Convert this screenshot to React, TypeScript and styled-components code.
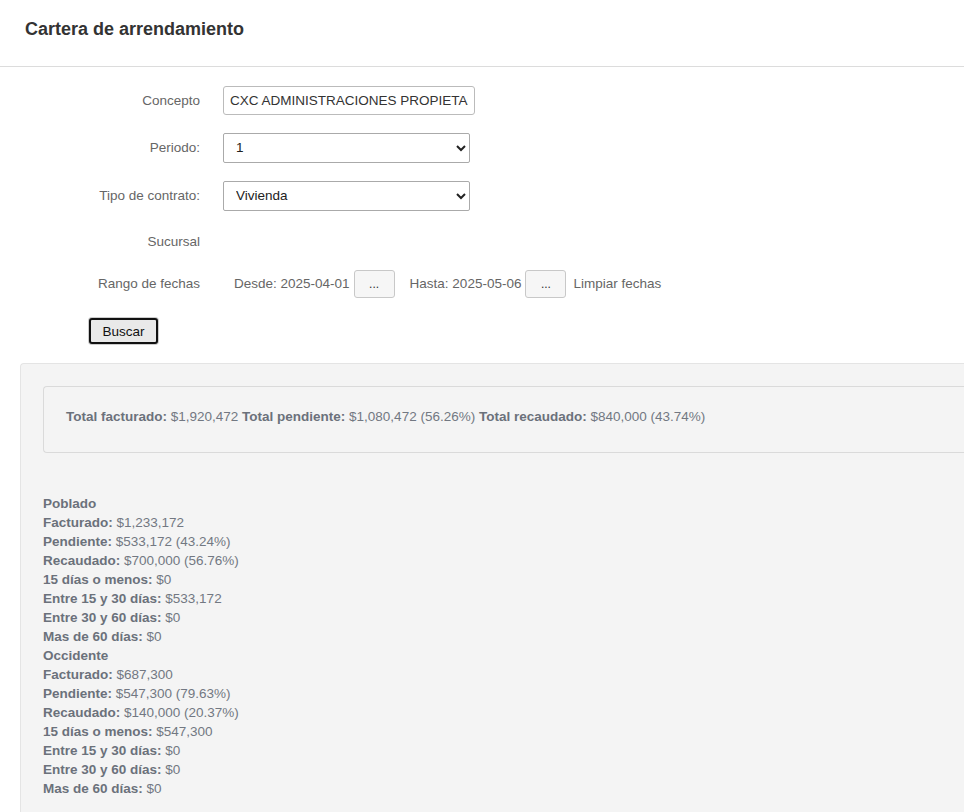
import React from "react";
import styled, { createGlobalStyle } from "styled-components";

const GlobalStyle = createGlobalStyle`
  html, body {
    margin: 0;
    padding: 0;
    background: #fff;
    overflow-x: hidden;
  }
  body {
    font-family: "Liberation Sans", Arial, sans-serif;
    font-size: 13.5px;
    color: #555;
  }
`;

interface Linea {
  label: string;
  value?: string;
}

interface Zona {
  nombre: string;
  lineas: Linea[];
}

const zonas: Zona[] = [
  {
    nombre: "Poblado",
    lineas: [
      { label: "Facturado:", value: "$1,233,172" },
      { label: "Pendiente:", value: "$533,172 (43.24%)" },
      { label: "Recaudado:", value: "$700,000 (56.76%)" },
      { label: "15 días o menos:", value: "$0" },
      { label: "Entre 15 y 30 días:", value: "$533,172" },
      { label: "Entre 30 y 60 días:", value: "$0" },
      { label: "Mas de 60 días:", value: "$0" },
    ],
  },
  {
    nombre: "Occidente",
    lineas: [
      { label: "Facturado:", value: "$687,300" },
      { label: "Pendiente:", value: "$547,300 (79.63%)" },
      { label: "Recaudado:", value: "$140,000 (20.37%)" },
      { label: "15 días o menos:", value: "$547,300" },
      { label: "Entre 15 y 30 días:", value: "$0" },
      { label: "Entre 30 y 60 días:", value: "$0" },
      { label: "Mas de 60 días:", value: "$0" },
    ],
  },
];

const App = () => {
  return (
    <>
      <GlobalStyle />
      <Header>
        <Title>Cartera de arrendamiento</Title>
      </Header>
      <Form>
        <Row $height={47}>
          <Label>Concepto</Label>
          <TextInput readOnly value="CXC ADMINISTRACIONES PROPIETARIOS" />
        </Row>
        <Row $height={47}>
          <Label>Periodo:</Label>
          <Select defaultValue="1">
            <option value="1">1</option>
            <option value="2">2</option>
          </Select>
        </Row>
        <Row $height={49}>
          <Label>Tipo de contrato:</Label>
          <Select defaultValue="Vivienda">
            <option value="Vivienda">Vivienda</option>
            <option value="Comercial">Comercial</option>
          </Select>
        </Row>
        <Row $height={43}>
          <Label>Sucursal</Label>
        </Row>
        <Row $height={41}>
          <Label>Rango de fechas</Label>
          <Fechas>
            <span>Desde: 2025-04-01</span>
            <DotsBtn>...</DotsBtn>
            <Spacer />
            <span>Hasta: 2025-05-06</span>
            <DotsBtn>...</DotsBtn>
            <Limpiar>Limpiar fechas</Limpiar>
          </Fechas>
        </Row>
        <SearchRow>
          <BuscarBtn>Buscar</BuscarBtn>
        </SearchRow>
      </Form>
      <Panel>
        <Well>
          <b>Total facturado:</b> $1,920,472 <b>Total pendiente:</b> $1,080,472 (56.26%){" "}
          <b>Total recaudado:</b> $840,000 (43.74%)
        </Well>
        <Resumen>
          {zonas.map((z) => (
            <React.Fragment key={z.nombre}>
              <Line>
                <b>{z.nombre}</b>
              </Line>
              {z.lineas.map((l) => (
                <Line key={z.nombre + l.label}>
                  <b>{l.label}</b> {l.value}
                </Line>
              ))}
            </React.Fragment>
          ))}
        </Resumen>
      </Panel>
    </>
  );
};
export default App;

const Header = styled.div`
  height: 67px;
  border-bottom: 1px solid #dcdcdc;
  display: flex;
  align-items: center;
  padding-left: 25px;
  box-sizing: border-box;
`;
const Title = styled.h1`
  margin: 0;
  font-size: 18px;
  font-weight: bold;
  color: #333;
  position: relative;
  top: -4px;
`;
const Form = styled.div`
  padding-top: 10px;
`;
const Row = styled.div<{ $height: number }>`
  display: flex;
  align-items: center;
  height: ${(p) => p.$height}px;
  gap: 23px;
`;
const Label = styled.div`
  width: 200px;
  text-align: right;
  color: #666;
  flex-shrink: 0;
`;
const TextInput = styled.input`
  width: 252px;
  height: 29px;
  box-sizing: border-box;
  border: 1px solid #bbb;
  border-radius: 3px;
  padding: 0 6px;
  font-family: "Liberation Sans", Arial, sans-serif;
  font-size: 13.5px;
  color: #333;
  outline: none;
`;
const Select = styled.select`
  width: 247px;
  height: 30px;
  box-sizing: border-box;
  border: 1px solid #aaa;
  border-radius: 2px;
  padding: 0 8px;
  font-family: "Liberation Sans", Arial, sans-serif;
  font-size: 13.5px;
  color: #222;
  background: #fff;
`;
const Fechas = styled.div`
  display: flex;
  align-items: center;
  padding-left: 11px;
  color: #666;
`;
const DotsBtn = styled.button`
  width: 41px;
  height: 28px;
  margin-left: 4px;
  border: 1px solid #c8c8c8;
  border-radius: 3px;
  background: #f6f6f6;
  font-family: "Liberation Sans", Arial, sans-serif;
  font-size: 12px;
  color: #333;
  padding: 0;
`;
const Spacer = styled.span`
  width: 15px;
`;
const Limpiar = styled.span`
  margin-left: 7px;
`;
const SearchRow = styled.div`
  padding: 14px 0 0 89px;
  height: 59px;
  box-sizing: border-box;
`;
const BuscarBtn = styled.button`
  width: 69px;
  height: 26px;
  border: 2px solid #111;
  border-radius: 3px;
  background: #e9e9e9;
  font-family: "Liberation Sans", Arial, sans-serif;
  font-size: 13.5px;
  color: #111;
  padding: 0;
  box-shadow: 0 0 0 1px #ccc;
`;
const Panel = styled.div`
  margin-left: 20px;
  background: #f4f4f4;
  border-top: 1px solid #e4e4e4;
  border-left: 1px solid #e4e4e4;
  border-top-left-radius: 4px;
  padding: 22px 0 20px 22px;
  min-height: 430px;
`;
const Well = styled.div`
  border: 1px solid #dadada;
  border-right: none;
  border-radius: 4px 0 0 4px;
  height: 67px;
  box-sizing: border-box;
  padding: 0 22px 7px;
  display: flex;
  align-items: center;
  white-space: pre;
  font-size: 13.5px;
  color: #727882;
  b {
    color: #6b717b;
  }
`;
const Resumen = styled.div`
  margin-top: 41px;
  color: #727882;
`;
const Line = styled.div`
  line-height: 19px;
  b {
    color: #6b717b;
  }
`;
